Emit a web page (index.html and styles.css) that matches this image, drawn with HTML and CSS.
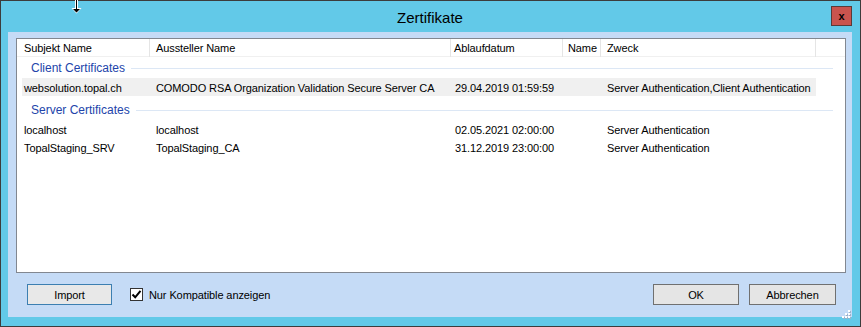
FILE: index.html
```html
<!DOCTYPE html>
<html lang="de">
<head>
<meta charset="utf-8">
<title>Zertifikate</title>
<link rel="stylesheet" href="styles.css">
</head>
<body>
<div class="window">
  <div class="titlebar">
    <span></span>
    <span class="title">Zertifikate</span>
    <button class="close">x</button>
  </div>
  <div class="client">
    <div class="listbox">
      <div class="lv-header">
        <div class="hc c1">Subjekt Name</div>
        <div class="hc c2">Aussteller Name</div>
        <div class="hc c3">Ablaufdatum</div>
        <div class="hc c4">Name</div>
        <div class="hc c5">Zweck</div>
      </div>
      <div class="group g1"><span class="gtext">Client Certificates</span><span class="rule"></span></div>
      <div class="row sel">
        <div class="dc d1">websolution.topal.ch</div>
        <div class="dc d2">COMODO RSA Organization Validation Secure Server CA</div>
        <div class="dc d3">29.04.2019 01:59:59</div>
        <div class="dc d4"></div>
        <div class="dc d5">Server Authentication,Client Authentication</div>
      </div>
      <div class="group g2"><span class="gtext">Server Certificates</span><span class="rule"></span></div>
      <div class="row">
        <div class="dc d1">localhost</div>
        <div class="dc d2">localhost</div>
        <div class="dc d3">02.05.2021 02:00:00</div>
        <div class="dc d4"></div>
        <div class="dc d5">Server Authentication</div>
      </div>
      <div class="row">
        <div class="dc d1">TopalStaging_SRV</div>
        <div class="dc d2">TopalStaging_CA</div>
        <div class="dc d3">31.12.2019 23:00:00</div>
        <div class="dc d4"></div>
        <div class="dc d5">Server Authentication</div>
      </div>
    </div>
    <div class="footer">
      <button class="btn btn-import">Import</button>
      <label class="check">
        <span class="box"><svg width="11" height="11" viewBox="0 0 11 11"><path d="M1.5 5.5 L4.2 8.3 L9.5 1.8" fill="none" stroke="#000" stroke-width="2"/></svg></span>
        <span>Nur Kompatible anzeigen</span>
      </label>
      <span class="spacer"></span>
      <button class="btn btn-ok">OK</button>
      <button class="btn btn-cancel">Abbrechen</button>
    </div>
    <svg class="grip" width="9" height="9" viewBox="0 0 9 9">
      <g fill="#9fb2c8"><rect x="7" y="1" width="2" height="2"/><rect x="4" y="4" width="2" height="2"/><rect x="7" y="4" width="2" height="2"/><rect x="1" y="7" width="2" height="2"/><rect x="4" y="7" width="2" height="2"/><rect x="7" y="7" width="2" height="2"/></g>
      <g fill="#ffffff"><rect x="6" y="0" width="2" height="2"/><rect x="3" y="3" width="2" height="2"/><rect x="6" y="3" width="2" height="2"/><rect x="0" y="6" width="2" height="2"/><rect x="3" y="6" width="2" height="2"/><rect x="6" y="6" width="2" height="2"/></g>
    </svg>
  </div>
  <svg class="cursor" width="11" height="15" viewBox="0 0 11 15">
    <path d="M4 0 H7 V8 H10.5 L5.5 13.5 L0.5 8 H4 Z" fill="#fff"/>
    <path d="M5 0 H6 V9 H9 L5.5 12.5 L2 9 H5 Z" fill="#000"/>
  </svg>
</div>
</body>
</html>
```
FILE: styles.css
```css
* { box-sizing: border-box; }
html, body { margin: 0; padding: 0; background: #fff; }
body {
  font-family: "Liberation Sans", Arial, sans-serif;
  font-size: 11px;
  letter-spacing: -0.1px;
  color: #000;
}
.window {
  position: relative;
  width: 861px;
  height: 327px;
  border: 1px solid #3c3c3c;
  background: #62c9e8;
  display: flex;
  flex-direction: column;
  padding: 0 8px 9px 7px;
}
.titlebar {
  height: 31px;
  display: grid;
  grid-template-columns: 1fr auto 1fr;
  align-items: center;
}
.title {
  font-size: 15px;
  letter-spacing: 0;
  color: #000;
  padding-top: 2px;
}
.close {
  justify-self: end;
  align-self: start;
  margin-top: 5px;
  width: 21px;
  height: 20px;
  padding: 0;
  background: #c9544e;
  border: 1px solid #5b3a38;
  color: #000;
  font-family: "Liberation Sans", Arial, sans-serif;
  font-weight: bold;
  font-size: 11px;
  line-height: 16px;
}
.client {
  position: relative;
  flex: 1;
  background: #c5dbf6;
  padding: 6px 6px 0 8px;
  display: flex;
  flex-direction: column;
}
.listbox {
  height: 235px;
  background: #fff;
  border: 1px solid #828790;
}
.lv-header {
  display: flex;
  height: 18px;
  border-bottom: 1px solid #f0f0f0;
}
.hc {
  height: 18px;
  line-height: 19px;
  border-right: 1px solid #e5e5e5;
  white-space: nowrap;
  overflow: hidden;
}
.c1 { width: 133px; padding-left: 7px; }
.c2 { width: 301px; padding-left: 6px; }
.c3 { width: 112px; padding-left: 3px; }
.c4 { width: 38px; padding-left: 5px; }
.c5 { width: 215px; padding-left: 6px; }
.group {
  display: flex;
  align-items: center;
  height: 21px;
  padding-top: 1px;
  padding-left: 14px;
  padding-right: 12px;
  color: #2244aa;
  font-size: 12px;
  letter-spacing: 0;
}
.g2 { height: 24px; padding-top: 4px; }
.gtext { white-space: nowrap; }
.rule {
  flex: 1;
  height: 1px;
  margin-left: 6px;
  background: #dce7f5;
}
.row {
  display: flex;
  height: 18px;
  margin-left: 5px;
  width: 794px;
  line-height: 20px;
}
.row.sel { background: #f0f0f0; }
.dc { white-space: nowrap; overflow: hidden; }
.d1 { width: 128px; padding-left: 2px; }
.d2 { width: 301px; padding-left: 6px; }
.d3 { width: 112px; padding-left: 4px; }
.d4 { width: 38px; }
.d5 { width: 215px; padding-left: 6px; overflow: visible; }
.footer {
  display: flex;
  align-items: center;
  margin-top: 11px;
  padding-left: 11px;
  padding-right: 10px;
  height: 21px;
}
.btn {
  height: 21px;
  padding: 0;
  font-family: "Liberation Sans", Arial, sans-serif;
  font-size: 11px;
  letter-spacing: -0.1px;
  color: #000;
  background: #e5e5e5;
  border: 1px solid #707070;
}
.btn-import { width: 85px; border-color: #3c7fb1; background: #e8e8e8; }
.btn-ok { width: 86px; }
.btn-cancel { width: 87px; margin-left: 10px; }
.spacer { flex: 1; }
.check {
  display: flex;
  align-items: center;
  margin-left: 18px;
}
.box {
  width: 13px;
  height: 13px;
  border: 1px solid #333;
  background: #fff;
  display: flex;
  align-items: center;
  justify-content: center;
  margin-right: 6px;
}
.grip {
  position: absolute;
  right: 1px;
  bottom: -2px;
}
.cursor {
  position: absolute;
  left: 70px;
  top: -1px;
}
```
